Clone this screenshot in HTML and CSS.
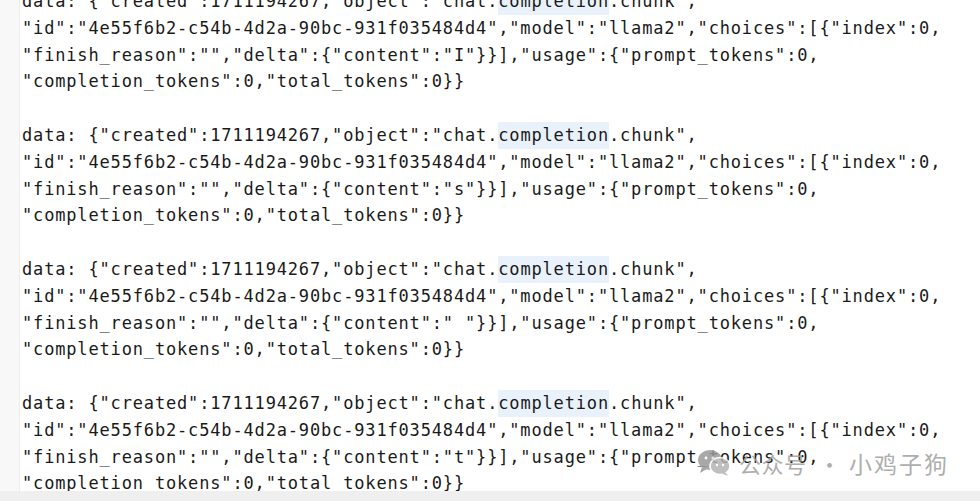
FILE: index.html
```html
<!DOCTYPE html>
<html lang="en">
<head>
<meta charset="utf-8">
<title>stream output</title>
<link rel="stylesheet" href="styles.css">
</head>
<body>
<div class="screen">
  <div class="editor">
    <div class="gutter"></div>
    <pre class="code">data: {"created":1711194267,"object":"chat.<span class="hl">completion</span>.chunk",
"id":"4e55f6b2-c54b-4d2a-90bc-931f035484d4","model":"llama2","choices":[{"index":0,
"finish_reason":"","delta":{"content":"I"}}],"usage":{"prompt_tokens":0,
"completion_tokens":0,"total_tokens":0}}

data: {"created":1711194267,"object":"chat.<span class="hl">completion</span>.chunk",
"id":"4e55f6b2-c54b-4d2a-90bc-931f035484d4","model":"llama2","choices":[{"index":0,
"finish_reason":"","delta":{"content":"s"}}],"usage":{"prompt_tokens":0,
"completion_tokens":0,"total_tokens":0}}

data: {"created":1711194267,"object":"chat.<span class="hl">completion</span>.chunk",
"id":"4e55f6b2-c54b-4d2a-90bc-931f035484d4","model":"llama2","choices":[{"index":0,
"finish_reason":"","delta":{"content":" "}}],"usage":{"prompt_tokens":0,
"completion_tokens":0,"total_tokens":0}}

data: {"created":1711194267,"object":"chat.<span class="hl">completion</span>.chunk",
"id":"4e55f6b2-c54b-4d2a-90bc-931f035484d4","model":"llama2","choices":[{"index":0,
"finish_reason":"","delta":{"content":"t"}}],"usage":{"prompt_tokens":0,
"completion_tokens":0,"total_tokens":0}}
</pre>
  </div>
  <div class="footer-strip"></div>
  <div class="watermark">
    <svg class="wm-icon" width="34" height="28" viewBox="0 0 34 28" aria-hidden="true">
      <ellipse cx="13" cy="11" rx="12" ry="10" fill="#9a9a9a"/>
      <path d="M5 18 L3 24 L10 20 Z" fill="#9a9a9a"/>
      <ellipse cx="23" cy="17" rx="10" ry="8.5" fill="#b4b4b4" stroke="#ffffff" stroke-width="1.5"/>
      <path d="M28 23 L31 27 L25 24.5 Z" fill="#b4b4b4"/>
      <circle cx="9" cy="9" r="1.4" fill="#ffffff"/>
      <circle cx="16" cy="9" r="1.4" fill="#ffffff"/>
      <circle cx="20" cy="16" r="1.2" fill="#ffffff"/>
      <circle cx="26" cy="16" r="1.2" fill="#ffffff"/>
    </svg>
    <span class="wm-text">公众号<span class="wm-dot">·</span><span class="wm-name">小鸡子狗</span></span>
  </div>
</div>
</body>
</html>
```

FILE: styles.css
```css
html, body {
  margin: 0;
  padding: 0;
  background: #ffffff;
}

.screen {
  position: relative;
  width: 980px;
  height: 501px;
  overflow: hidden;
  display: flex;
  flex-direction: column;
}

.editor {
  height: 491px;
  overflow: hidden;
  display: flex;
  flex-direction: row;
  background: #ffffff;
}

.gutter {
  width: 19px;
  flex: none;
  background: #f8f8f8;
  border-right: 1px solid #ececec;
}

.code {
  margin: -12px 0 0 2px;
  font-family: "DejaVu Sans Mono", "Liberation Mono", monospace;
  font-size: 17px;
  letter-spacing: 0.84px;
  line-height: 26.8px;
  color: #1a1a1a;
  white-space: pre;
}

.hl {
  background: #e9f2fa;
  padding: 3px 0 4px;
}

.footer-strip {
  flex: 1;
  background: #efefef;
}

.watermark {
  position: absolute;
  left: 697px;
  top: 449px;
  display: flex;
  align-items: center;
  gap: 8px;
  opacity: 0.85;
}

.wm-icon {
  display: block;
}

.wm-text {
  font-family: "Noto Sans CJK SC", "Noto Sans", sans-serif;
  font-size: 22px;
  letter-spacing: 0.5px;
  color: #a0a0a0;
  line-height: 28px;
}

.wm-dot {
  padding: 0 8px 0 12px;
}

.wm-name {
  font-size: 23px;
  letter-spacing: 2px;
}
```
